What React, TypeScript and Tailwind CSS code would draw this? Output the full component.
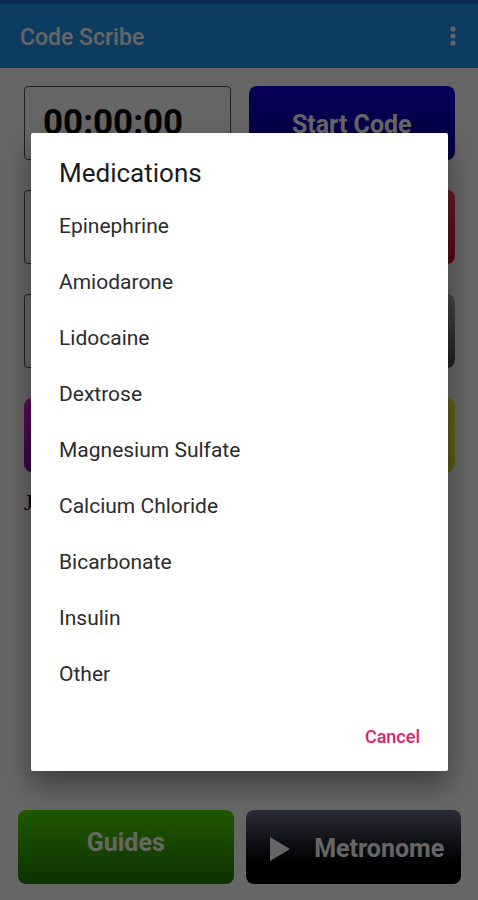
import React, { useState } from 'react';

const medications = [
  'Epinephrine',
  'Amiodarone',
  'Lidocaine',
  'Dextrose',
  'Magnesium Sulfate',
  'Calcium Chloride',
  'Bicarbonate',
  'Insulin',
  'Other',
];

const actions = [
  { label: 'Start Code', color: 'from-[#1000e0] to-[#0c0096]' },
  { label: 'Shock', color: 'from-[#f04c5a] to-[#d01428]' },
  { label: 'Rhythm', color: 'from-[#b4b4b4] to-[#505050]' },
];

const App = () => {
  const [open, setOpen] = useState(true);

  return (
    <div className="relative flex min-h-screen flex-col bg-white font-[Roboto,sans-serif]">
      {/* status bar + app bar */}
      <div className="h-1 bg-[#2468d0]" />
      <header className="flex h-16 items-center justify-between bg-[#2196f3] px-5">
        <h1 className="pt-1 text-[23px] font-medium text-white">Code Scribe</h1>
        <button aria-label="More options" className="px-0.5 text-white">
          <svg width="6" height="20" viewBox="0 0 6 20" fill="currentColor">
            <circle cx="3" cy="3" r="2.6" />
            <circle cx="3" cy="10" r="2.6" />
            <circle cx="3" cy="17" r="2.6" />
          </svg>
        </button>
      </header>

      <main className="flex flex-1 flex-col pt-[18px] pr-[23px] pl-6">
        <div className="flex flex-col gap-[30px]">
          {actions.map((action, i) => (
            <div key={action.label} className="grid grid-cols-2 gap-[18px]">
              <div className="flex h-[74px] items-center rounded border border-[#505050] px-[18px] text-[35px] font-bold text-black">
                {i === 0 && '00:00:00'}
              </div>
              <button
                aria-label={action.label}
                className={`h-[74px] rounded-lg bg-linear-to-b pt-1 text-[25px] font-bold text-white ${action.color}`}
              >
                {i === 0 && action.label}
              </button>
            </div>
          ))}
          <div className="grid grid-cols-2 gap-[18px]">
            <button aria-label="Medications" className="h-[74px] rounded-lg bg-linear-to-b from-[#e020e0] to-[#8c00b4]" />
            <button aria-label="Notes" className="h-[74px] rounded-lg bg-linear-to-b from-[#eeee46] to-[#e0e03c]" />
          </div>
        </div>
        <p className="mt-3.5 font-['Liberation_Serif',serif] text-2xl text-black">J</p>
      </main>

      <footer className="grid grid-cols-2 gap-3 pr-[17px] pb-4 pl-[18px] text-[25px] font-bold text-white">
        <button className="h-[74px] rounded-lg bg-linear-to-b from-[#50dc00] to-[#257d00] pb-2">Guides</button>
        <button className="flex h-[74px] items-center justify-center gap-6 rounded-lg bg-linear-to-b from-[#6c7090] to-black to-90% pt-1 pl-2">
          <svg width="20" height="24" viewBox="0 0 20 24" fill="currentColor">
            <path d="M0 0L20 12L0 24Z" />
          </svg>
          Metronome
        </button>
      </footer>

      {open && (
        <div className="absolute inset-0 flex items-center justify-center bg-black/60 pt-1 pr-[30px] pl-[31px]">
          <div
            role="dialog"
            aria-labelledby="title"
            className="w-full rounded-xs bg-white pt-6 pb-3.5 shadow-[0_14px_28px_rgba(0,0,0,0.4)]"
          >
            <h2 id="title" className="px-7 pb-2.5 text-[26px] leading-8 text-[#1c1c1c]">Medications</h2>
            <ul>
              {medications.map((name) => (
                <li key={name}>
                  <button onClick={() => setOpen(false)} className="h-14 w-full px-7 text-left text-[21px] text-[#2c2c2c]">
                    {name}
                  </button>
                </li>
              ))}
            </ul>
            <div className="flex justify-end px-7 pt-3.5">
              <button onClick={() => setOpen(false)} className="h-10 text-lg font-medium text-[#e0206c]">
                Cancel
              </button>
            </div>
          </div>
        </div>
      )}
    </div>
  );
};

export default App;
